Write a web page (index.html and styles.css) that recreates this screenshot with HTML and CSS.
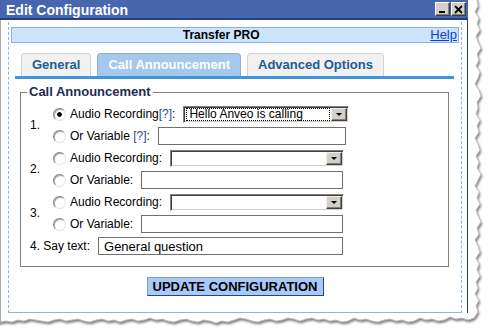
FILE: index.html
```html
<!DOCTYPE html>
<html lang="en">
<head>
  <meta charset="UTF-8" />
  <title>Edit Configuration</title>
  <link rel="stylesheet" href="styles.css">
</head>
<body>
  <div class="sheet">
    <!-- torn paper edge -->
    <svg class="paper" width="490" height="335">
      <defs>
        <filter id="torn" x="-10%" y="-10%" width="120%" height="120%">
          <feDropShadow dx="1" dy="2" stdDeviation="1.3" flood-color="#555" flood-opacity="0.75"/>
        </filter>
      </defs>
      <path filter="url(#torn)" fill="#fff" stroke="#b8b8b8" stroke-width="0.8" d="M-5,-5 L476,-5 L478,6 L475,12 L479,18 L477,24 L480,30 L476,36 L478,42 L481,48 L477,54 L479,60 L476,66 L480,72 L478,78 L475,84 L479,90 L481,96 L477,102 L478,108 L476,114 L480,120 L477,126 L479,132 L475,138 L478,144 L480,150 L476,156 L479,162 L477,168 L481,174 L478,180 L475,186 L479,192 L477,198 L480,204 L476,210 L478,216 L481,222 L477,228 L479,234 L475,240 L478,246 L480,252 L476,258 L479,264 L477,270 L480,276 L476,282 L478,288 L475,294 L479,300 L476,306 L478,312 L474,318 L468,320 L462,318 L456,319 L450,317 L444,320 L438,321 L432,319 L426,320 L420,318 L414,321 L408,322 L402,320 L396,321 L390,319 L384,320 L378,322 L372,321 L366,319 L360,320 L354,318 L348,321 L342,322 L336,320 L330,321 L324,319 L318,320 L312,318 L306,319 L300,321 L294,319 L288,318 L282,320 L276,321 L270,319 L264,320 L258,322 L252,321 L246,319 L240,318 L234,320 L228,322 L222,321 L216,323 L210,321 L204,320 L198,322 L192,321 L186,319 L180,320 L174,322 L168,321 L162,319 L156,320 L150,318 L144,320 L138,321 L132,319 L126,320 L120,322 L114,320 L108,321 L102,319 L96,320 L90,322 L84,321 L78,319 L72,320 L66,321 L60,319 L54,320 L48,322 L42,321 L36,320 L30,319 L24,321 L18,320 L12,322 L6,321 L0,322 L-5,322 Z"/>
    </svg>

    <div class="window">
      <div class="titlebar">
        <span class="title">Edit Configuration</span>
        <span class="win-btns">
          <span class="win-btn">
            <svg width="9" height="9" viewBox="0 0 9 9"><rect x="1" y="6" width="6" height="2" fill="#000"/></svg>
          </span>
          <span class="win-btn">
            <svg width="9" height="9" viewBox="0 0 9 9"><path d="M1 1 L8 8 M8 1 L1 8" stroke="#000" stroke-width="1.8"/></svg>
          </span>
        </span>
      </div>

      <div class="window-body">
        <div class="panel">
          <div class="header">
            <span class="header-title">Transfer PRO</span>
            <a class="help" href="#">Help</a>
          </div>

          <div class="tabs">
            <div class="tab">General</div>
            <div class="tab active">Call Announcement</div>
            <div class="tab">Advanced Options</div>
          </div>

          <fieldset class="box">
            <legend>Call Announcement</legend>

            <div class="group">
              <div class="num">1.</div>
              <div class="lines">
                <div class="line">
                  <span class="radio checked"></span>
                  <span class="label">Audio Recording<a class="hint" href="#">[?]</a>:</span>
                  <div class="select s1"><span class="select-text focus">Hello Anveo is calling</span><span class="drop"></span></div>
                </div>
                <div class="line">
                  <span class="radio"></span>
                  <span class="label">Or Variable <a class="hint" href="#">[?]</a>:</span>
                  <input type="text" class="field f1" value="">
                </div>
              </div>
            </div>

            <div class="group">
              <div class="num">2.</div>
              <div class="lines">
                <div class="line">
                  <span class="radio"></span>
                  <span class="label">Audio Recording:</span>
                  <div class="select s2"><span class="select-text"></span><span class="drop"></span></div>
                </div>
                <div class="line">
                  <span class="radio"></span>
                  <span class="label">Or Variable:</span>
                  <input type="text" class="field f2" value="">
                </div>
              </div>
            </div>

            <div class="group">
              <div class="num">3.</div>
              <div class="lines">
                <div class="line">
                  <span class="radio"></span>
                  <span class="label">Audio Recording:</span>
                  <div class="select s2"><span class="select-text"></span><span class="drop"></span></div>
                </div>
                <div class="line">
                  <span class="radio"></span>
                  <span class="label">Or Variable:</span>
                  <input type="text" class="field f2" value="">
                </div>
              </div>
            </div>

            <div class="line say">
              <span class="label">4. Say text:</span>
              <input type="text" class="field f3" value="General question">
            </div>
          </fieldset>

          <div class="actions">
            <button class="update">UPDATE CONFIGURATION</button>
          </div>
        </div>
      </div>
      <div class="window-foot"></div>
    </div>
  </div>
</body>
</html>
```

FILE: styles.css
```css
* {
  box-sizing: border-box;
}
body {
  margin: 0;
  background: #fff;
  font-family: "Liberation Sans", Arial, sans-serif;
  font-size: 12px;
  color: #000;
}

.sheet {
  position: relative;
  width: 490px;
  height: 335px;
  overflow: hidden;
}

.paper {
  position: absolute;
  left: 0;
  top: 0;
}

.window {
  position: relative;
  width: 468px;
}

/* Title bar */
.titlebar {
  display: flex;
  height: 20px;
  padding: 0 2px 0 6px;
  background: #4766ad;
  border-bottom: 2px solid #21408c;
}

.title {
  color: #fff;
  font-weight: bold;
  font-size: 14px;
  line-height: 16px;
  padding-top: 2px;
}

.win-btns {
  display: flex;
  gap: 1px;
  margin-left: auto;
  margin-top: 2px;
}

.win-btn {
  width: 15px;
  height: 14px;
  display: flex;
  align-items: center;
  justify-content: center;
  background: #d4d0c8;
  border: 1px solid;
  border-color: #fff #404040 #404040 #fff;
  box-shadow: inset -1px -1px #808080;
}

.window-body {
  border-left: 1px solid #a9a9a9;
  border-right: 1px solid #21408c;
  padding: 2px 5px 0 7px;
}

.window-foot {
  height: 12px;
  border-left: 1px solid #a9a9a9;
}

.panel {
  border-left: 1px dashed #8db1f1;
  border-right: 1px dashed #8db1f1;
  border-bottom: 1px solid #8db1f1;
  padding: 5px 2px 16px;
}

/* Header */
.header {
  display: flex;
  height: 16px;
  border: 1px solid #8eaee8;
  background: #cde4fd;
  line-height: 14px;
}

.header-title {
  flex: 1;
  text-align: center;
  font-weight: bold;
  font-size: 12px;
}

.help {
  color: #1040d0;
  font-size: 13px;
  padding-right: 1px;
}

/* Tabs */
.tabs {
  display: flex;
  gap: 6px;
  padding-left: 6px;
  margin: 10px 5px 0 4px;
  border-bottom: 3px solid #3d95dc;
}

.tab {
  height: 23px;
  padding: 0 10px;
  border: 1px solid #d2d2d2;
  border-bottom: none;
  border-radius: 4px 4px 0 0;
  background: #f1f1f1;
  color: #245b92;
  font-weight: bold;
  font-size: 13px;
  line-height: 22px;
}

.tab.active {
  background: #a6c8ec;
  border-color: #8bb0dc;
  color: #fff;
}

/* Fieldset */
.box {
  margin: 6px 10px 0 9px;
  padding: 4px 9px 9px 6px;
  border: 1px solid #808080;
  min-width: 0;
}

.box legend {
  padding: 0 2px;
  font-size: 13px;
  line-height: 14px;
  font-weight: bold;
  color: #1c2b58;
}

.group {
  display: flex;
  align-items: center;
  padding-left: 3px;
}

.num {
  width: 23px;
}

.line {
  display: flex;
  align-items: center;
  height: 22px;
}

.line.say {
  padding-left: 3px;
}

.radio {
  width: 13px;
  height: 13px;
  margin-right: 4px;
  border-radius: 50%;
  border: 1px solid;
  border-color: #808080 #e4e4e4 #e4e4e4 #808080;
  box-shadow: inset 1px 1px 0 #b0b0b0;
  background: #fff;
}

.radio.checked {
  background: radial-gradient(circle, #000 0 2px, #fff 2.6px);
}

.label {
  white-space: nowrap;
}

.hint {
  color: #29479b;
  text-decoration: none;
}

/* Drop-down */
.select {
  display: flex;
  height: 17px;
  margin-left: 8px;
  padding: 1px;
  border: 1px solid;
  border-color: #808080 #fff #fff #808080;
  box-shadow: inset 1px 1px #404040, inset -1px -1px #d4d0c8;
  background: #fff;
}

.s1 { width: 166px; }
.s2 { width: 174px; }

.select-text {
  flex: 1;
  margin: 0 1px 0 1px;
  padding: 0 2px;
  border: 1px dotted transparent;
  font-size: 12px;
  line-height: 11px;
  white-space: nowrap;
}

.select-text.focus {
  border-color: #000;
}

.drop {
  width: 16px;
  display: flex;
  align-items: center;
  justify-content: center;
  background: #d4d0c8;
  border: 1px solid;
  border-color: #eeeeee #404040 #404040 #eeeeee;
  box-shadow: inset -1px -1px #808080;
}

.drop::before {
  content: "";
  border-left: 3px solid transparent;
  border-right: 3px solid transparent;
  border-top: 3px solid #000;
}

/* Text fields */
.field {
  height: 18px;
  margin: 0 0 0 8px;
  padding: 0 5px;
  border: 1px solid #6f6f6f;
  font-family: inherit;
  font-size: 13px;
  color: #000;
  background: #fff;
  outline: none;
}

.f1 { width: 188px; }
.f2 { width: 202px; }
.f3 { width: 245px; }

/* Submit */
.actions {
  margin-top: 10px;
  text-align: center;
}

.update {
  width: 177px;
  height: 19px;
  padding: 0;
  background: #a9c9f8;
  border: 1px solid;
  border-color: #7c9cd8 #24448f #24448f #7c9cd8;
  font-family: "Liberation Sans", Arial, sans-serif;
  font-weight: bold;
  font-size: 13px;
  color: #000;
}
```
